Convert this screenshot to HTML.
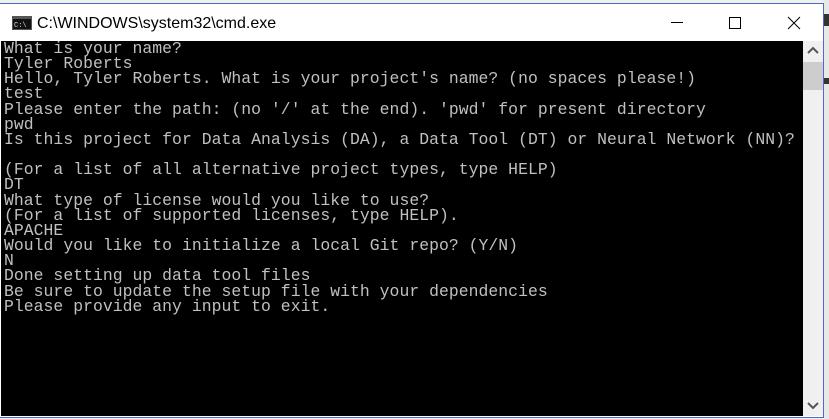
<!DOCTYPE html>
<html><head><style>
body{margin:0;width:829px;height:419px;overflow:hidden;background:#f0f0f0;position:relative;font-family:"Liberation Sans",sans-serif}
.win{position:absolute;left:0;top:3px;width:823px;height:413px;background:#fff;border-right:1px solid #4a6cc8;border-top:1px solid #4a6cc8;border-bottom:1px solid #4a6cc8}
.title{position:absolute;left:37px;top:11px;font-size:16px;color:#000}
.con{position:absolute;left:1px;top:38px;width:802px;height:375px;background:#000;overflow:hidden}
pre{margin:0;padding:0 0 0 3px;font-family:"Liberation Mono",monospace;font-size:16.4px;line-height:15.15px;color:#c0c0c0;position:absolute;top:0px;letter-spacing:0.05px}
.sb{position:absolute;left:803px;top:38px;width:20px;height:375px;background:#f0f0f0}
.thumb{position:absolute;left:803px;top:62px;width:20px;height:28px;background:#cdcdcd}
</style></head><body>
<div style="position:absolute;left:824px;top:0;width:5px;height:419px;background:#e8e8e8"></div>
<div style="position:absolute;left:824px;top:14px;width:5px;height:12px;background:#333"></div>
<div style="position:absolute;left:824px;top:78px;width:5px;height:6px;background:#333"></div>
<div class="win">
<svg style="position:absolute;left:12px;top:12px" width="20" height="14"><rect x="0" y="0" width="20" height="14" fill="#555"/><rect x="1" y="3" width="18" height="10" fill="#111"/><text x="2" y="11" font-size="7" fill="#ddd" font-family="Liberation Mono">C:\</text></svg>
<div class="title">C:\WINDOWS\system32\cmd.exe</div>
<div style="position:absolute;left:671px;top:18px;width:12px;height:1px;background:#000"></div>
<div style="position:absolute;left:729px;top:13px;width:10px;height:10px;border:1px solid #000"></div>
<svg style="position:absolute;left:787px;top:12px" width="14" height="14"><path d="M1 1L13 13M13 1L1 13" stroke="#000" stroke-width="1"/></svg>
</div>
<div class="con" style="top:41px"><pre>What is your name?
Tyler Roberts
Hello, Tyler Roberts. What is your project's name? (no spaces please!)
test
Please enter the path: (no '/' at the end). 'pwd' for present directory
pwd
Is this project for Data Analysis (DA), a Data Tool (DT) or Neural Network (NN)?

(For a list of all alternative project types, type HELP)
DT
What type of license would you like to use?
(For a list of supported licenses, type HELP).
APACHE
Would you like to initialize a local Git repo? (Y/N)
N
Done setting up data tool files
Be sure to update the setup file with your dependencies
Please provide any input to exit.</pre></div>
<div class="sb" style="top:41px"></div>
<div class="thumb"></div>
<svg style="position:absolute;left:807px;top:46px" width="12" height="8"><path d="M1 7L6 2L11 7" stroke="#555" stroke-width="2" fill="none"/></svg>
<svg style="position:absolute;left:807px;top:402px" width="12" height="8"><path d="M1 1L6 6L11 1" stroke="#555" stroke-width="2" fill="none"/></svg>
</body></html>
